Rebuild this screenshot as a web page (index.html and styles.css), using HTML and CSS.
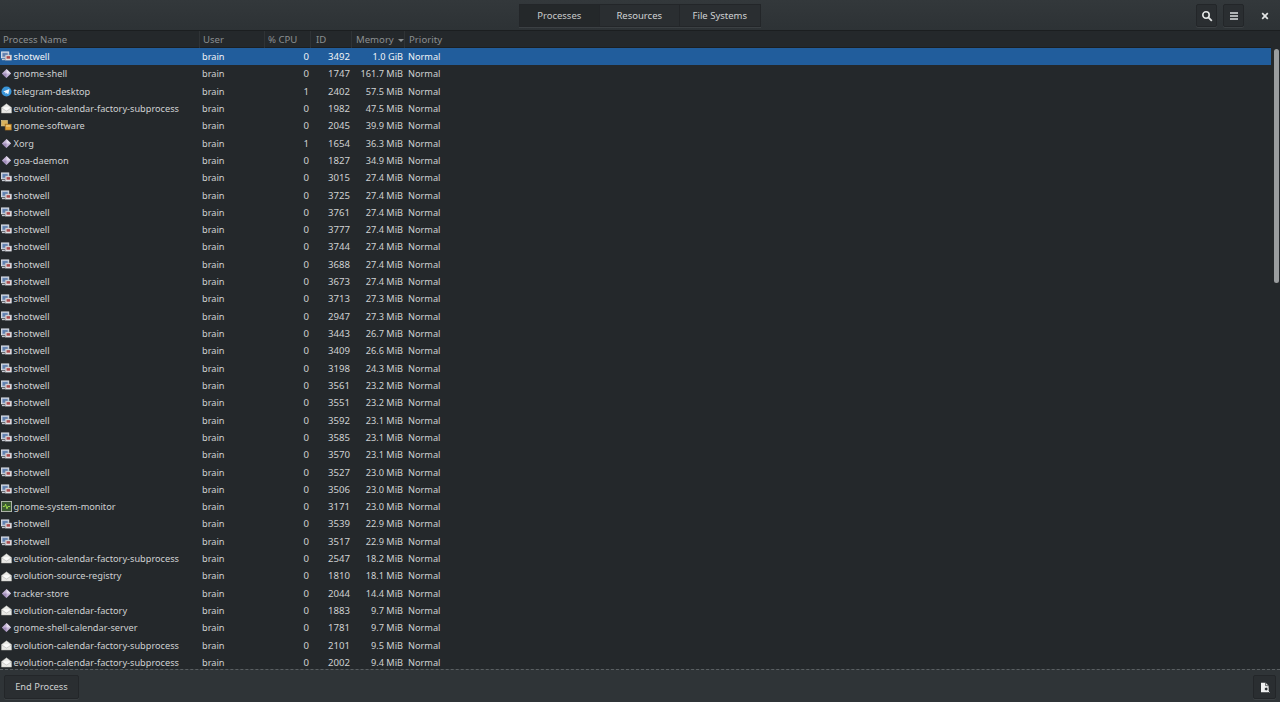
FILE: index.html
```html
<!DOCTYPE html>
<html lang="en">
<head>
<meta charset="utf-8">
<title>System Monitor</title>
<link rel="stylesheet" href="styles.css">
</head>
<body>
<svg class="defs" width="0" height="0" aria-hidden="true">
  <symbol id="i-shot" viewBox="0 0 12 12">
    <rect x="0.5" y="1" width="8" height="6.5" fill="#a9b8cf" stroke="#e3e7ee" stroke-width="0.9"/>
    <rect x="1.8" y="2.3" width="5.4" height="3.8" fill="#5f7fb0"/>
    <rect x="4.6" y="4.4" width="7" height="5.6" fill="#e6e7ea" stroke="#a5a6ae" stroke-width="0.6"/>
    <rect x="6" y="5.6" width="4" height="2.8" fill="#a84a4c"/>
    <rect x="1" y="8.6" width="3.2" height="1.4" fill="#c8ccd4"/>
  </symbol>
  <symbol id="i-dia" viewBox="0 0 12 12">
    <path d="M6 1 11 6 6 11 1 6Z" fill="#c3b3d6"/>
    <path d="M6 1 11 6 6 6Z" fill="#e4dcec"/>
    <path d="M1 6 6 11 6 6Z" fill="#9f8bb8"/>
  </symbol>
  <symbol id="i-tg" viewBox="0 0 12 12">
    <circle cx="6" cy="6" r="5.5" fill="#3a95d8"/>
    <path d="M2.4 6 9.2 3.2 8 9 5.8 7.5 4.8 8.4 4.6 6.9Z" fill="#f2f7fb"/>
  </symbol>
  <symbol id="i-env" viewBox="0 0 12 12">
    <path d="M0.5 5 6 0.8 11.5 5V11H0.5Z" fill="#e9e9e6" stroke="#b9b9b4" stroke-width="0.5"/>
    <path d="M2.5 4.5H9.5V6.5L6 8.5 2.5 6.5Z" fill="#fbfbfa"/>
    <path d="M0.8 5.5 6 8.8 11.2 5.5" fill="none" stroke="#a8a8a4" stroke-width="0.5"/>
  </symbol>
  <symbol id="i-soft" viewBox="0 0 12 12">
    <rect x="0.5" y="0.5" width="6.5" height="6" fill="#d9b25e" stroke="#f0d795" stroke-width="0.6"/>
    <rect x="4.5" y="4.5" width="7" height="6.5" fill="#e0a23a" stroke="#8a5e1d" stroke-width="0.6"/>
    <rect x="5.5" y="6" width="5" height="1" fill="#f4dfa6"/>
  </symbol>
  <symbol id="i-mon" viewBox="0 0 12 12">
    <rect x="0.5" y="0.5" width="11" height="11" fill="#3c5a32" stroke="#b8bdb2" stroke-width="1"/>
    <path d="M2 6H4L5 3.5 6.5 8.5 7.5 6H10" fill="none" stroke="#a5e04a" stroke-width="1"/>
  </symbol>
</svg>

<div class="window">
  <header class="titlebar">
    <div class="tabs">
      <button class="tab tab-active">Processes</button>
      <button class="tab">Resources</button>
      <button class="tab">File Systems</button>
    </div>
    <div class="actions">
      <button class="icon-btn" aria-label="Search">
        <svg width="12" height="12" viewBox="0 0 12 12"><circle cx="5" cy="5" r="3.2" fill="none" stroke="#e4e6e6" stroke-width="1.6"/><path d="M7.4 7.4 10.8 10.8" stroke="#e4e6e6" stroke-width="1.8"/></svg>
      </button>
      <button class="icon-btn" aria-label="Menu">
        <svg width="10" height="10" viewBox="0 0 10 10"><path d="M1 2H9M1 5H9M1 8H9" stroke="#dcdfdf" stroke-width="1.3"/></svg>
      </button>
      <button class="close-btn" aria-label="Close">
        <svg width="8" height="8" viewBox="0 0 8 8"><path d="M1.2 1.2 6.8 6.8M6.8 1.2 1.2 6.8" stroke="#e4e6e6" stroke-width="1.7"/></svg>
      </button>
    </div>
  </header>

  <main class="content">
    <div class="list">
      <div class="row head">
        <span class="c-name">Process Name</span>
        <span class="c-user">User</span>
        <span class="c-cpu">% CPU</span>
        <span class="c-id">ID</span>
        <span class="c-mem">Memory <i class="sort"></i></span>
        <span class="c-pri">Priority</span>
      </div>
      <div class="row selected"><span class="c-name"><svg class="ic"><use href="#i-shot"/></svg>shotwell</span><span class="c-user">brain</span><span class="c-cpu">0</span><span class="c-id">3492</span><span class="c-mem">1.0 GiB</span><span class="c-pri">Normal</span></div>
      <div class="row"><span class="c-name"><svg class="ic"><use href="#i-dia"/></svg>gnome-shell</span><span class="c-user">brain</span><span class="c-cpu">0</span><span class="c-id">1747</span><span class="c-mem">161.7 MiB</span><span class="c-pri">Normal</span></div>
      <div class="row"><span class="c-name"><svg class="ic"><use href="#i-tg"/></svg>telegram-desktop</span><span class="c-user">brain</span><span class="c-cpu">1</span><span class="c-id">2402</span><span class="c-mem">57.5 MiB</span><span class="c-pri">Normal</span></div>
      <div class="row"><span class="c-name"><svg class="ic"><use href="#i-env"/></svg>evolution-calendar-factory-subprocess</span><span class="c-user">brain</span><span class="c-cpu">0</span><span class="c-id">1982</span><span class="c-mem">47.5 MiB</span><span class="c-pri">Normal</span></div>
      <div class="row"><span class="c-name"><svg class="ic"><use href="#i-soft"/></svg>gnome-software</span><span class="c-user">brain</span><span class="c-cpu">0</span><span class="c-id">2045</span><span class="c-mem">39.9 MiB</span><span class="c-pri">Normal</span></div>
      <div class="row"><span class="c-name"><svg class="ic"><use href="#i-dia"/></svg>Xorg</span><span class="c-user">brain</span><span class="c-cpu">1</span><span class="c-id">1654</span><span class="c-mem">36.3 MiB</span><span class="c-pri">Normal</span></div>
      <div class="row"><span class="c-name"><svg class="ic"><use href="#i-dia"/></svg>goa-daemon</span><span class="c-user">brain</span><span class="c-cpu">0</span><span class="c-id">1827</span><span class="c-mem">34.9 MiB</span><span class="c-pri">Normal</span></div>
      <div class="row"><span class="c-name"><svg class="ic"><use href="#i-shot"/></svg>shotwell</span><span class="c-user">brain</span><span class="c-cpu">0</span><span class="c-id">3015</span><span class="c-mem">27.4 MiB</span><span class="c-pri">Normal</span></div>
      <div class="row"><span class="c-name"><svg class="ic"><use href="#i-shot"/></svg>shotwell</span><span class="c-user">brain</span><span class="c-cpu">0</span><span class="c-id">3725</span><span class="c-mem">27.4 MiB</span><span class="c-pri">Normal</span></div>
      <div class="row"><span class="c-name"><svg class="ic"><use href="#i-shot"/></svg>shotwell</span><span class="c-user">brain</span><span class="c-cpu">0</span><span class="c-id">3761</span><span class="c-mem">27.4 MiB</span><span class="c-pri">Normal</span></div>
      <div class="row"><span class="c-name"><svg class="ic"><use href="#i-shot"/></svg>shotwell</span><span class="c-user">brain</span><span class="c-cpu">0</span><span class="c-id">3777</span><span class="c-mem">27.4 MiB</span><span class="c-pri">Normal</span></div>
      <div class="row"><span class="c-name"><svg class="ic"><use href="#i-shot"/></svg>shotwell</span><span class="c-user">brain</span><span class="c-cpu">0</span><span class="c-id">3744</span><span class="c-mem">27.4 MiB</span><span class="c-pri">Normal</span></div>
      <div class="row"><span class="c-name"><svg class="ic"><use href="#i-shot"/></svg>shotwell</span><span class="c-user">brain</span><span class="c-cpu">0</span><span class="c-id">3688</span><span class="c-mem">27.4 MiB</span><span class="c-pri">Normal</span></div>
      <div class="row"><span class="c-name"><svg class="ic"><use href="#i-shot"/></svg>shotwell</span><span class="c-user">brain</span><span class="c-cpu">0</span><span class="c-id">3673</span><span class="c-mem">27.4 MiB</span><span class="c-pri">Normal</span></div>
      <div class="row"><span class="c-name"><svg class="ic"><use href="#i-shot"/></svg>shotwell</span><span class="c-user">brain</span><span class="c-cpu">0</span><span class="c-id">3713</span><span class="c-mem">27.3 MiB</span><span class="c-pri">Normal</span></div>
      <div class="row"><span class="c-name"><svg class="ic"><use href="#i-shot"/></svg>shotwell</span><span class="c-user">brain</span><span class="c-cpu">0</span><span class="c-id">2947</span><span class="c-mem">27.3 MiB</span><span class="c-pri">Normal</span></div>
      <div class="row"><span class="c-name"><svg class="ic"><use href="#i-shot"/></svg>shotwell</span><span class="c-user">brain</span><span class="c-cpu">0</span><span class="c-id">3443</span><span class="c-mem">26.7 MiB</span><span class="c-pri">Normal</span></div>
      <div class="row"><span class="c-name"><svg class="ic"><use href="#i-shot"/></svg>shotwell</span><span class="c-user">brain</span><span class="c-cpu">0</span><span class="c-id">3409</span><span class="c-mem">26.6 MiB</span><span class="c-pri">Normal</span></div>
      <div class="row"><span class="c-name"><svg class="ic"><use href="#i-shot"/></svg>shotwell</span><span class="c-user">brain</span><span class="c-cpu">0</span><span class="c-id">3198</span><span class="c-mem">24.3 MiB</span><span class="c-pri">Normal</span></div>
      <div class="row"><span class="c-name"><svg class="ic"><use href="#i-shot"/></svg>shotwell</span><span class="c-user">brain</span><span class="c-cpu">0</span><span class="c-id">3561</span><span class="c-mem">23.2 MiB</span><span class="c-pri">Normal</span></div>
      <div class="row"><span class="c-name"><svg class="ic"><use href="#i-shot"/></svg>shotwell</span><span class="c-user">brain</span><span class="c-cpu">0</span><span class="c-id">3551</span><span class="c-mem">23.2 MiB</span><span class="c-pri">Normal</span></div>
      <div class="row"><span class="c-name"><svg class="ic"><use href="#i-shot"/></svg>shotwell</span><span class="c-user">brain</span><span class="c-cpu">0</span><span class="c-id">3592</span><span class="c-mem">23.1 MiB</span><span class="c-pri">Normal</span></div>
      <div class="row"><span class="c-name"><svg class="ic"><use href="#i-shot"/></svg>shotwell</span><span class="c-user">brain</span><span class="c-cpu">0</span><span class="c-id">3585</span><span class="c-mem">23.1 MiB</span><span class="c-pri">Normal</span></div>
      <div class="row"><span class="c-name"><svg class="ic"><use href="#i-shot"/></svg>shotwell</span><span class="c-user">brain</span><span class="c-cpu">0</span><span class="c-id">3570</span><span class="c-mem">23.1 MiB</span><span class="c-pri">Normal</span></div>
      <div class="row"><span class="c-name"><svg class="ic"><use href="#i-shot"/></svg>shotwell</span><span class="c-user">brain</span><span class="c-cpu">0</span><span class="c-id">3527</span><span class="c-mem">23.0 MiB</span><span class="c-pri">Normal</span></div>
      <div class="row"><span class="c-name"><svg class="ic"><use href="#i-shot"/></svg>shotwell</span><span class="c-user">brain</span><span class="c-cpu">0</span><span class="c-id">3506</span><span class="c-mem">23.0 MiB</span><span class="c-pri">Normal</span></div>
      <div class="row"><span class="c-name"><svg class="ic"><use href="#i-mon"/></svg>gnome-system-monitor</span><span class="c-user">brain</span><span class="c-cpu">0</span><span class="c-id">3171</span><span class="c-mem">23.0 MiB</span><span class="c-pri">Normal</span></div>
      <div class="row"><span class="c-name"><svg class="ic"><use href="#i-shot"/></svg>shotwell</span><span class="c-user">brain</span><span class="c-cpu">0</span><span class="c-id">3539</span><span class="c-mem">22.9 MiB</span><span class="c-pri">Normal</span></div>
      <div class="row"><span class="c-name"><svg class="ic"><use href="#i-shot"/></svg>shotwell</span><span class="c-user">brain</span><span class="c-cpu">0</span><span class="c-id">3517</span><span class="c-mem">22.9 MiB</span><span class="c-pri">Normal</span></div>
      <div class="row"><span class="c-name"><svg class="ic"><use href="#i-env"/></svg>evolution-calendar-factory-subprocess</span><span class="c-user">brain</span><span class="c-cpu">0</span><span class="c-id">2547</span><span class="c-mem">18.2 MiB</span><span class="c-pri">Normal</span></div>
      <div class="row"><span class="c-name"><svg class="ic"><use href="#i-env"/></svg>evolution-source-registry</span><span class="c-user">brain</span><span class="c-cpu">0</span><span class="c-id">1810</span><span class="c-mem">18.1 MiB</span><span class="c-pri">Normal</span></div>
      <div class="row"><span class="c-name"><svg class="ic"><use href="#i-dia"/></svg>tracker-store</span><span class="c-user">brain</span><span class="c-cpu">0</span><span class="c-id">2044</span><span class="c-mem">14.4 MiB</span><span class="c-pri">Normal</span></div>
      <div class="row"><span class="c-name"><svg class="ic"><use href="#i-env"/></svg>evolution-calendar-factory</span><span class="c-user">brain</span><span class="c-cpu">0</span><span class="c-id">1883</span><span class="c-mem">9.7 MiB</span><span class="c-pri">Normal</span></div>
      <div class="row"><span class="c-name"><svg class="ic"><use href="#i-dia"/></svg>gnome-shell-calendar-server</span><span class="c-user">brain</span><span class="c-cpu">0</span><span class="c-id">1781</span><span class="c-mem">9.7 MiB</span><span class="c-pri">Normal</span></div>
      <div class="row"><span class="c-name"><svg class="ic"><use href="#i-env"/></svg>evolution-calendar-factory-subprocess</span><span class="c-user">brain</span><span class="c-cpu">0</span><span class="c-id">2101</span><span class="c-mem">9.5 MiB</span><span class="c-pri">Normal</span></div>
      <div class="row"><span class="c-name"><svg class="ic"><use href="#i-env"/></svg>evolution-calendar-factory-subprocess</span><span class="c-user">brain</span><span class="c-cpu">0</span><span class="c-id">2002</span><span class="c-mem">9.4 MiB</span><span class="c-pri">Normal</span></div>
    </div>
    <div class="scrollbar"><div class="thumb"></div></div>
  </main>

  <footer class="bottombar">
    <button class="end-btn">End Process</button>
    <button class="doc-btn" aria-label="Show details">
      <svg width="10" height="11" viewBox="0 0 10 11"><path d="M1 .7H5.6L8.6 3.7V10.3H1Z" fill="#f1f2f2"/><path d="M5.6 .7V3.7H8.6" fill="none" stroke="#2b2f32" stroke-width=".7"/><circle cx="6.2" cy="7" r="1.8" fill="#2b2f32" stroke="#f1f2f2" stroke-width=".7"/><path d="M7.4 8.3 9.4 10.4" stroke="#f1f2f2" stroke-width="1"/></svg>
    </button>
  </footer>
</div>
</body>
</html>
```

FILE: styles.css
```css
* { box-sizing: border-box; }

html, body {
  margin: 0;
  height: 100%;
  overflow: hidden;
}

body {
  background: #24282b;
  color: #d3d5d6;
  font-family: "Noto Sans", "Open Sans", sans-serif;
  font-size: 9.2px;
}

.defs { position: absolute; }

button {
  font: inherit;
  color: inherit;
  padding: 0;
  cursor: default;
}

.window {
  display: flex;
  flex-direction: column;
  width: 1280px;
  height: 702px;
}

.titlebar {
  position: relative;
  flex: 0 0 31px;
  display: flex;
  justify-content: flex-end;
  align-items: flex-start;
  padding-top: 4px;
  background: linear-gradient(#33383b, #2d3235);
  border-bottom: 1px solid #1b1e20;
}

.tabs {
  position: absolute;
  left: 519px;
  top: 4px;
  display: flex;
  height: 23px;
}

.tab {
  width: 80.5px;
  height: 23px;
  padding-bottom: 1px;
  background: #2a2e31;
  border: 1px solid #232629;
  border-left-width: 0;
  font-size: 9.5px;
  color: #d0d2d3;
  box-shadow: 0 1px 0 #3b4043;
}

.tab:first-child { border-left-width: 1px; }
.tab-active { background: #24282a; color: #c8cacb; }

.actions {
  display: flex;
  align-items: center;
  gap: 6px;
  padding-right: 4px;
}

.icon-btn {
  display: flex;
  align-items: center;
  justify-content: center;
  width: 21px;
  height: 23px;
  background: #2a2e31;
  border: 1px solid #232629;
  border-radius: 2px;
  box-shadow: 0 1px 0 #3b4043;
}

.close-btn {
  display: flex;
  align-items: center;
  justify-content: center;
  width: 23px;
  height: 23px;
  margin-left: 3px;
  background: transparent;
  border: 0;
}

.content {
  flex: 1 1 auto;
  min-height: 0;
  display: flex;
  overflow: hidden;
  position: relative;
}

.list {
  flex: 1 1 auto;
  min-width: 0;
  overflow: hidden;
}

.row {
  display: grid;
  grid-template-columns: 199px 65px 46px 41px 53px 1fr;
  align-items: center;
  height: 17.32px;
  line-height: 17.32px;
  white-space: nowrap;
  color: #cfd1d2;
}

.row > span { padding: 0 1px; overflow: visible; }
.row > .c-id { font-size: 9.6px; }
.row > .c-cpu { font-size: 9.6px; }

.head {
  height: 17px;
  line-height: 17px;
  font-size: 9.6px;
  background: #24282b;
  color: #8b8f91;
  border-bottom: 1px solid #1c1f21;
}

.row.head > span {
  height: 17px;
  padding: 0 0 0 3px;
  text-align: left;
  border-left: 1px solid #2f3336;
}

.row.head > .c-name { border-left: 0; padding-left: 3px; }
.row.head > .c-id { padding-left: 5px; }
.row.head > .c-mem { padding-left: 4px; }
.row.head > .c-pri { padding-left: 4px; letter-spacing: .05px; }

.selected {
  background: #215d9c;
  color: #f0f3f6;
}

.c-name {
  display: flex;
  align-items: center;
  gap: 1.5px;
}

.row > .c-name { padding-left: 1px; }
.row.head > .c-name { display: block; }

.ic {
  flex: none;
  width: 11px;
  height: 11px;
}

.row > .c-user { padding-left: 3px; }
.c-cpu, .c-id, .c-mem { text-align: right; }
.row > .c-pri { padding-left: 4px; }

.sort {
  display: inline-block;
  width: 0;
  height: 0;
  margin-left: 2px;
  vertical-align: middle;
  border: 3px solid transparent;
  border-top: 3px solid #8b8f91;
  border-bottom: 0;
}

.scrollbar {
  flex: 0 0 9px;
  padding: 18px 0 0 3px;
  background: #24282b;
}

.thumb {
  width: 5px;
  height: 234px;
  background: #9a9d9f;
  border-radius: 3px;
}

.bottombar {
  flex: 0 0 33px;
  display: flex;
  justify-content: space-between;
  align-items: center;
  padding: 2px 4px 0;
  background: #2f3437;
  border-top: 1px dashed #5a5f62;
}

.end-btn {
  width: 75px;
  height: 24px;
  padding-bottom: 1px;
  background: #2a2e31;
  border: 1px solid #232629;
  border-radius: 2px;
  font-size: 9.3px;
  color: #cfd1d2;
  box-shadow: 0 1px 0 #3b4043;
}

.doc-btn {
  display: flex;
  align-items: center;
  justify-content: center;
  width: 23px;
  height: 24px;
  background: #2a2e31;
  border: 1px solid #232629;
  border-radius: 2px;
  box-shadow: 0 1px 0 #3b4043;
}
```
